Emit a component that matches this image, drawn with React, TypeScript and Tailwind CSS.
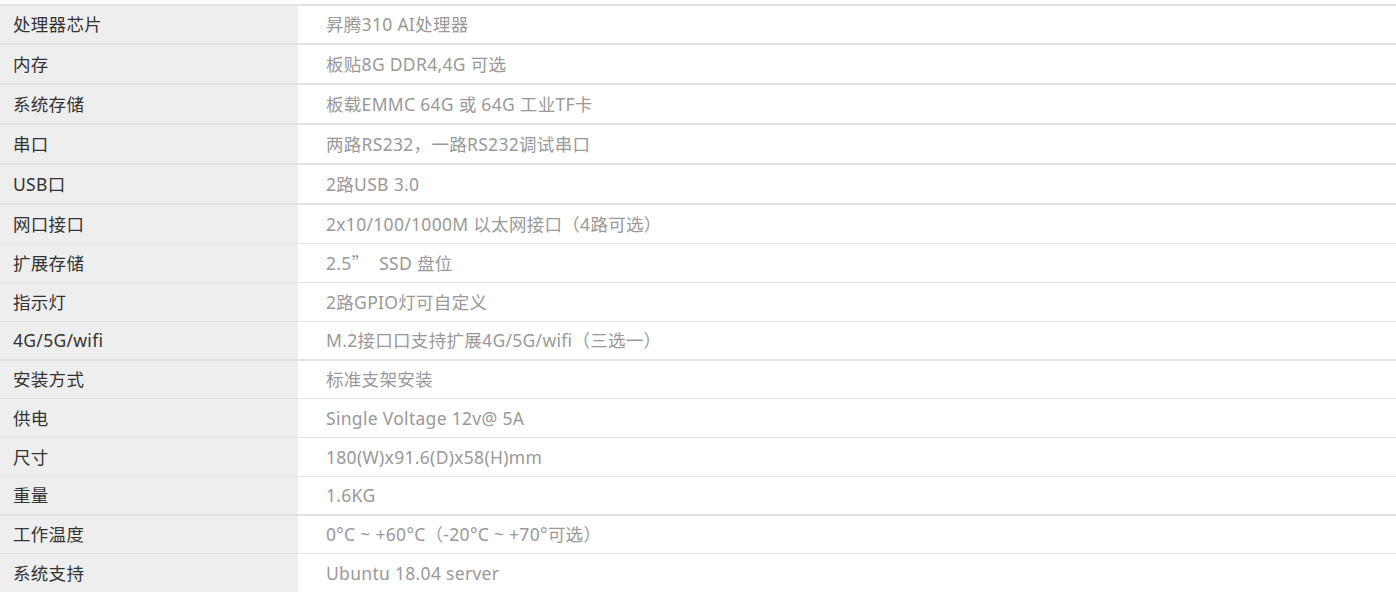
import type { ReactNode } from "react";

const cjk = { fontFamily: '"Noto Sans CJK SC", sans-serif' };

const specs: { label: string; value: ReactNode; h: string; b: string }[] = [
  { label: "处理器芯片", value: "昇腾310 AI处理器", h: "h-[37px]", b: "border-t-2" },
  { label: "内存", value: "板贴8G DDR4,4G 可选", h: "h-[38px]", b: "border-t-2" },
  { label: "系统存储", value: "板载EMMC 64G 或 64G 工业TF卡", h: "h-[38px]", b: "border-t-2" },
  { label: "串口", value: "两路RS232，一路RS232调试串口", h: "h-[38px]", b: "border-t-2" },
  { label: "USB口", value: "2路USB 3.0", h: "h-[38px]", b: "border-t-2" },
  { label: "网口接口", value: "2x10/100/1000M 以太网接口（4路可选）", h: "h-[38px]", b: "border-t-2" },
  {
    label: "扩展存储",
    value: (
      <>
        2.5<span style={cjk}>”</span>
        {"  SSD 盘位"}
      </>
    ),
    h: "h-[38px]",
    b: "border-t",
  },
  { label: "指示灯", value: "2路GPIO灯可自定义", h: "h-[38px]", b: "border-t" },
  { label: "4G/5G/wifi", value: "M.2接口口支持扩展4G/5G/wifi（三选一）", h: "h-[37px]", b: "border-t" },
  { label: "安装方式", value: "标准支架安装", h: "h-[37px]", b: "border-t-2" },
  { label: "供电", value: "Single Voltage 12v@ 5A", h: "h-[38px]", b: "border-t" },
  { label: "尺寸", value: "180(W)x91.6(D)x58(H)mm", h: "h-[38px]", b: "border-t" },
  { label: "重量", value: "1.6KG", h: "h-[37px]", b: "border-t" },
  { label: "工作温度", value: "0°C ~ +60°C（-20°C ~ +70°可选）", h: "h-[37px]", b: "border-t-2" },
  { label: "系统支持", value: "Ubuntu 18.04 server", h: "h-[38px]", b: "border-t" },
];

export default function App() {
  return (
    <div
      className="w-[1396px] h-[592px] overflow-hidden bg-white pt-1 text-[17.5px] tracking-[0.3px]"
      style={{ fontFamily: '"Noto Sans", "Noto Sans CJK SC", sans-serif' }}
    >
      {specs.map((row, i) => (
        <div key={i} className={`flex border-[#e2e2e2] ${row.b}`}>
          <div className={`w-[298px] shrink-0 flex items-center pl-[13px] bg-[#eeeeee] text-[#333333] ${row.h}`}>
            {row.label}
          </div>
          <div className={`flex-1 flex items-center pl-[28px] text-[#999999] whitespace-pre ${row.h}`}>
            {row.value}
          </div>
        </div>
      ))}
    </div>
  );
}
